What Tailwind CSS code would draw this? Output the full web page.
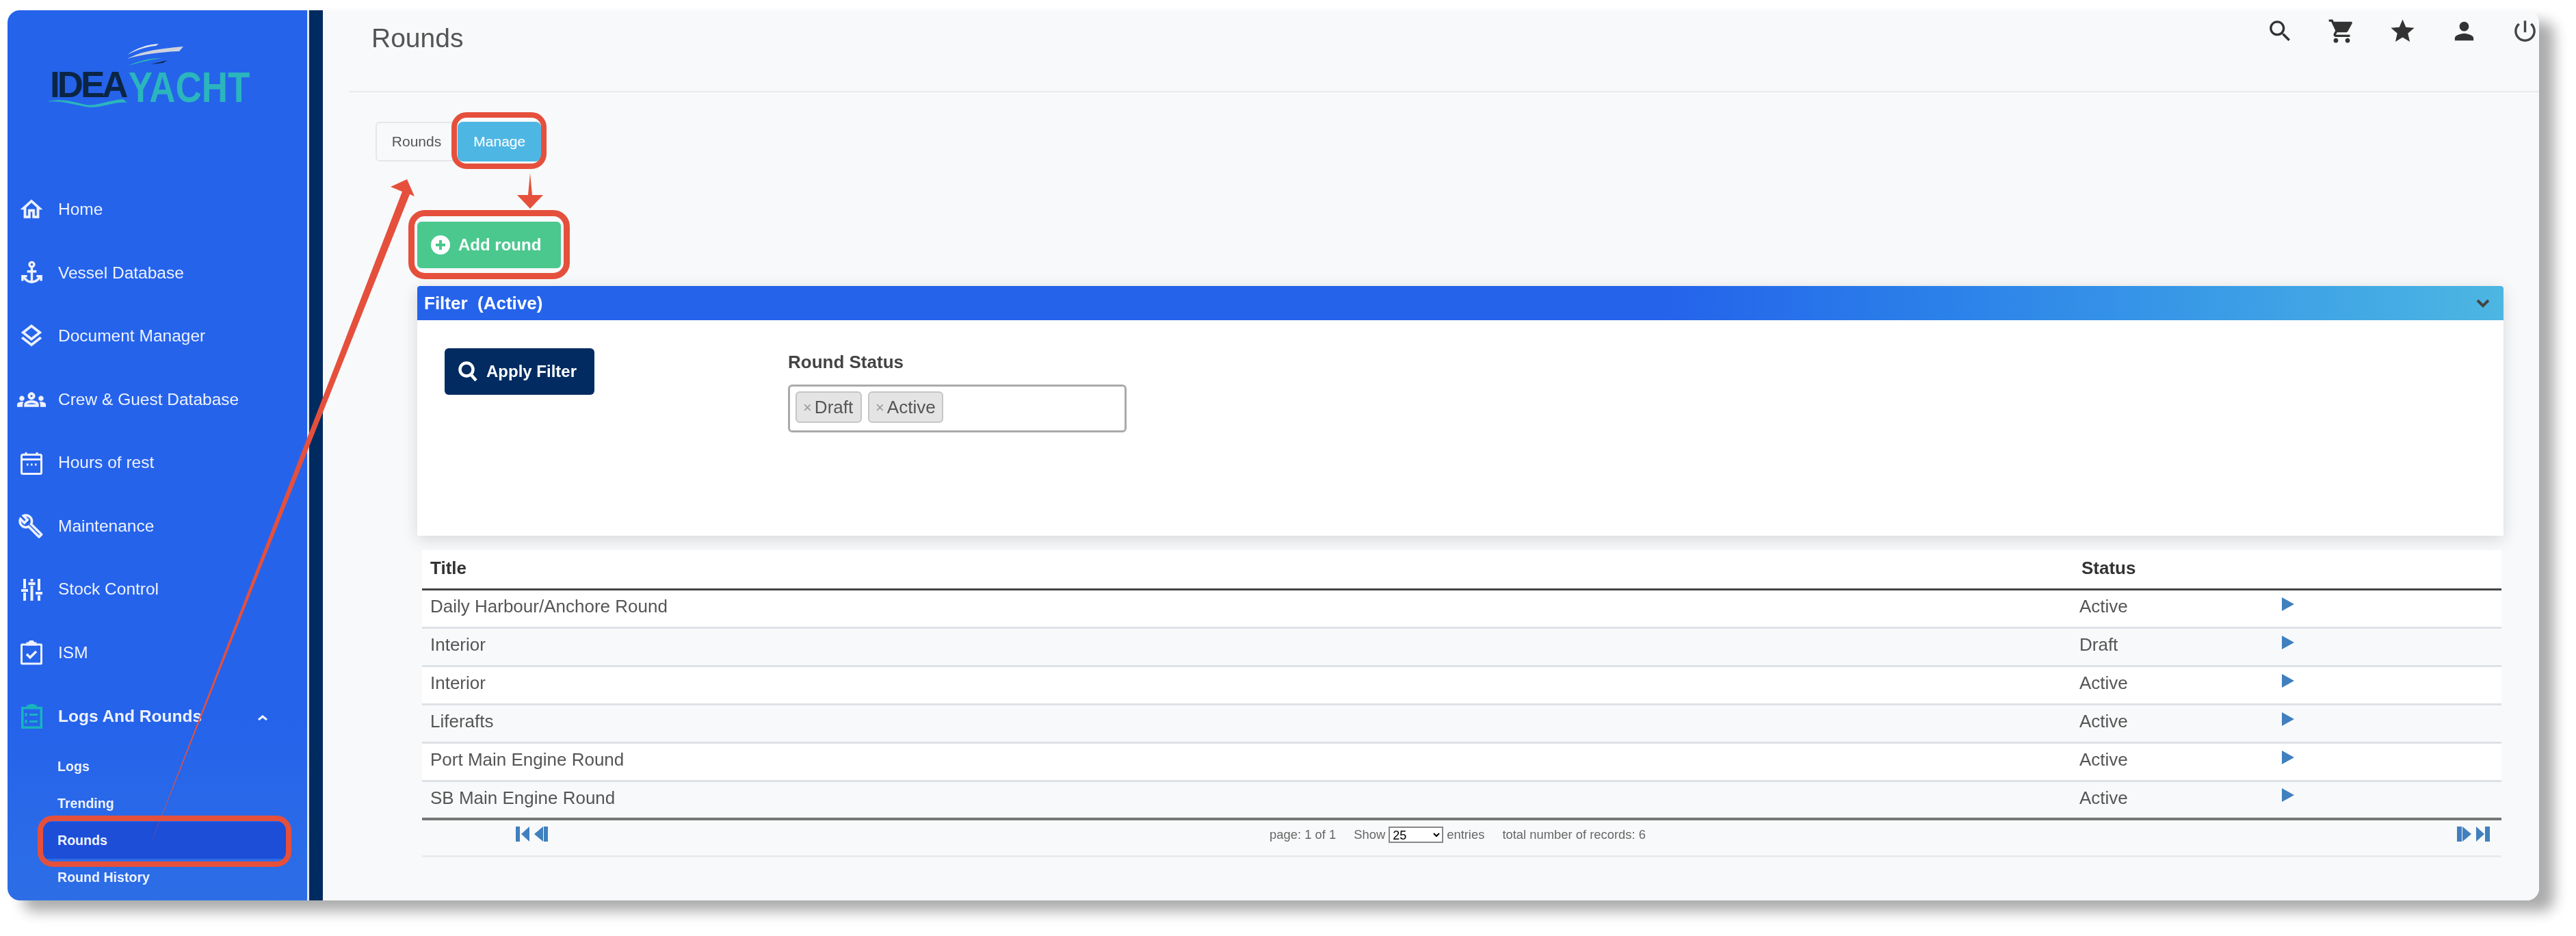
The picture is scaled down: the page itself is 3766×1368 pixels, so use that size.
<!DOCTYPE html>
<html lang="en">
<head>
    <meta charset="UTF-8">
    <title>Rounds</title>
    <script src="https://cdn.jsdelivr.net/npm/@tailwindcss/browser@4"></script>
</head>
<body class="bg-white font-['Liberation_Sans',sans-serif] overflow-hidden h-[1368px] relative">
<div class="flex ml-[11px] mt-[15px] w-[3701px] h-[1301px] rounded-[18px] overflow-hidden shadow-[22px_16px_20px_rgba(0,0,0,0.33)] absolute blur-[0.5px]">

    <!-- sidebar -->
    <aside class="w-[438px] shrink-0 bg-linear-to-b from-[#2563eb] from-80% to-[#2d6ee6] text-[#eef2ff]">
        <div class="h-[245px] pt-[90px] pl-[62px] relative">
            <svg class="absolute left-[57px] top-[47px]" width="300" height="100" viewBox="68 62 300 100">
                <path d="M186 86C205 76 225 72 268 68L262 75C235 76 205 80 186 86Z" fill="#cfd3dc"/>
                <path d="M186 80C200 70 215 65 232 64L228 67C214 68 200 73 186 80Z" fill="#e4e6ee"/>
                <path d="M187 96C200 90 220 84 237 85C222 87 205 91 187 96Z" fill="#2bb5bd"/>
                <path d="M220 94L245 88L238 92Z" fill="#0b2545"/>
                <path d="M68 149C85 143 105 148 125 153C140 156 160 146 180 145L186 150C165 148 145 160 125 156C105 152 85 146 68 149Z" fill="#2bb5bd"/>
            </svg>
            <div class="flex font-bold text-[53px] leading-[38px] h-[38px]">
                <span class="tracking-[-4px] text-[#0b2545]">IDEA</span>
                <span class="text-[#2bb5bd] origin-top scale-y-[1.18] ml-[4px]">YACHT</span>
            </div>
        </div>
        <nav class="text-[24.5px]">
            <a class="flex items-center h-[92.6px]">
                <span class="w-[70px] mr-[4px] flex justify-center"><svg width="38" height="38" viewBox="0 0 24 24" fill="currentColor" stroke="currentColor" stroke-width=".4"><path d="M12 5.69l5 4.5V18h-2v-6H9v6H7v-7.81l5-4.5M12 3L2 12h3v8h6v-6h2v6h6v-8h3L12 3z"/></svg></span>Home
            </a>
            <a class="flex items-center h-[92.6px]">
                <span class="w-[70px] mr-[4px] flex justify-center"><svg width="41" height="41" viewBox="0 0 24 24" fill="currentColor"><path d="M12,2A3,3 0 0,0 9,5C9,6.27 9.8,7.4 11,7.83V10H8V12H11V18.92C9.16,18.63 7.53,17.57 6.53,16H8V14H3V19H5V17.3C6.58,19.61 9.2,21 12,21C14.8,21 17.42,19.61 19,17.31V19H21V14H16V16H17.46C16.46,17.56 14.83,18.63 13,18.92V12H16V10H13V7.82C14.2,7.4 15,6.27 15,5A3,3 0 0,0 12,2M12,4A1,1 0 0,1 13,5A1,1 0 0,1 12,6A1,1 0 0,1 11,5A1,1 0 0,1 12,4Z"/></svg></span>Vessel Database
            </a>
            <a class="flex items-center h-[92.6px]">
                <span class="w-[70px] mr-[4px] flex justify-center"><svg width="40" height="40" viewBox="0 0 24 24" fill="currentColor" stroke="currentColor" stroke-width=".3"><path d="M11.99 18.54l-7.37-5.73L3 14.07l9 7 9-7-1.63-1.27zM12 16l7.36-5.73L21 9l-9-7-9 7 1.63 1.27L12 16zm0-11.47L17.74 9 12 13.47 6.26 9 12 4.53z"/></svg></span>Document Manager
            </a>
            <a class="flex items-center h-[92.6px]">
                <span class="w-[70px] mr-[4px] flex justify-center"><svg width="42" height="42" viewBox="0 0 24 24" fill="currentColor" stroke="currentColor" stroke-width=".3"><path d="M4 13c1.1 0 2-.9 2-2s-.9-2-2-2-2 .9-2 2 .9 2 2 2zm1.13 1.1C4.76 14.04 4.39 14 4 14c-.99 0-1.93.21-2.78.58C.48 14.9 0 15.62 0 16.43V18h4.5v-1.61c0-.83.23-1.61.63-2.29zM20 13c1.1 0 2-.9 2-2s-.9-2-2-2-2 .9-2 2 .9 2 2 2zm4 3.43c0-.81-.48-1.53-1.22-1.85C21.93 14.21 20.99 14 20 14c-.39 0-.76.04-1.13.1.4.68.63 1.46.63 2.29V18H24v-1.57zM16.24 13.65c-1.17-.52-2.61-.9-4.24-.9-1.63 0-3.07.39-4.24.9C6.68 14.13 6 15.21 6 16.39V18h12v-1.61c0-1.18-.68-2.26-1.76-2.74zM8.07 16c.09-.23.13-.39.91-.69.97-.38 1.99-.56 3.02-.56s2.05.18 3.02.56c.77.3.81.46.91.69H8.07zM12 8c.55 0 1 .45 1 1s-.45 1-1 1-1-.45-1-1 .45-1 1-1m0-2c-1.66 0-3 1.34-3 3s1.34 3 3 3 3-1.34 3-3-1.34-3-3-3z"/></svg></span>Crew &amp; Guest Database
            </a>
            <a class="flex items-center h-[92.6px]">
                <span class="w-[70px] mr-[4px] flex justify-center"><svg width="32" height="34" viewBox="0 0 32 34" fill="none" stroke="currentColor" stroke-width="3"><rect x="1.5" y="4.500" width="29" height="28" rx="2"/><path d="M1.5 11.500h29M8 1v5M24 1v5"/><path d="M9 19h2.500M15 19h2.500M21 19h2.500"/></svg></span>Hours of rest
            </a>
            <a class="flex items-center h-[92.6px]">
                <span class="w-[70px] mr-[4px] flex justify-center"><svg class="-ml-[3px]" width="38" height="38" viewBox="0 0 24 24" fill="currentColor" stroke="currentColor" stroke-width=".3"><path d="M22.61 18.99l-9.08-9.08c.93-2.34.45-5.1-1.44-7C9.79.61 6.21.4 3.66 2.25L7.5 6.1 6.08 7.51 2.25 3.69C.4 6.23.61 9.82 2.91 12.11c1.86 1.86 4.57 2.35 6.89 1.48l9.11 9.11c.39.39 1.02.39 1.41 0l2.3-2.3c.4-.38.4-1.01 0-1.41zm-3 1.6l-9.46-9.46c-.61.45-1.29.72-2 .82-1.36.2-2.79-.21-3.83-1.25C3.37 9.76 2.93 8.5 3 7.26l3.09 3.09 4.24-4.24-3.09-3.09c1.24-.07 2.49.37 3.44 1.31 1.08 1.08 1.49 2.57 1.24 3.96-.12.71-.42 1.37-.88 1.96l9.45 9.45-.88.88z"/></svg></span>Maintenance
            </a>
            <a class="flex items-center h-[92.6px]">
                <span class="w-[70px] mr-[4px] flex justify-center"><svg width="31" height="32" viewBox="0 0 31 32" fill="currentColor"><path d="M3 0h4v14H3zM3 20h4v12H3zM0 15h10v4H0zM13.500 0h4v4h-4zM13.500 10h4v22h-4zM10.500 5h10v4h-10zM24 0h4v17h-4zM24 24h4v8h-4zM21 19h10v4H21z"/></svg></span>Stock Control
            </a>
            <a class="flex items-center h-[92.6px]">
                <span class="w-[70px] mr-[4px] flex justify-center"><svg width="32" height="36" viewBox="0 0 32 36" fill="none" stroke="currentColor" stroke-width="3"><rect x="1.5" y="6" width="29" height="28" rx="1"/><path d="M10 6h12v-2h-3a3 3 0 0 0-6 0h-3z" fill="currentColor"/><path d="M9 20l5 5 9-9" stroke-width="3.500"/></svg></span>ISM
            </a>
            <a class="flex items-center h-[92.6px] font-bold">
                <span class="w-[70px] mr-[4px] flex justify-center text-[#17b5bd]"><svg width="31" height="36" viewBox="0 0 31 36" fill="none" stroke="currentColor" stroke-width="3.500"><rect x="1.750" y="5.750" width="27.500" height="28.500"/><path d="M10 5h11V3h-3a2.500 2.500 0 0 0-5 0h-3z" fill="currentColor"/><path d="M7 13v5M12 15.500h12M7 23v5M12 25.500h12" stroke-width="3"/></svg></span>Logs And Rounds
                <svg class="ml-[82px] mt-[4px]" width="14" height="8" viewBox="0 0 14 8" fill="none" stroke="currentColor" stroke-width="3"><path d="M1 7l6-5 6 5"/></svg>
            </a>
            <div class="text-[19.6px] font-bold">
                <a class="flex items-center h-[54px] ml-[52px] pl-[21px] w-[355px]">Logs</a>
                <a class="flex items-center h-[54px] ml-[52px] pl-[21px] w-[355px]">Trending</a>
                <a class="relative flex items-center h-[54px] ml-[52px] pl-[21px] w-[355px] bg-[#1d4ed8]">Rounds
                    <span class="absolute -left-[8px] -right-[8px] -top-[9px] -bottom-[12px] border-[8px] border-[#e5503c] rounded-[22px]"></span>
                </a>
                <a class="flex items-center h-[54px] ml-[52px] pl-[21px] w-[355px]">Round History</a>
            </div>
        </nav>
    </aside>
    <div class="w-[3px] shrink-0 bg-[#dfe7f6]"></div>
    <div class="w-[20px] shrink-0 bg-[#002b60]"></div>

    <!-- main -->
    <main class="flex-1 bg-[#f8f9fa] min-w-0">
        <header class="ml-[38px] h-[120px] border-b-2 border-[#e9ecef] flex justify-between pl-[33px]">
            <h1 class="text-[39px] leading-[46px] pt-[18px] text-[#555]">Rounds</h1>
            <div class="flex gap-[48.500px] pt-[10px] h-[51px] text-[#333]">
                <svg width="41" height="41" viewBox="0 0 24 24" fill="currentColor"><path d="M15.5 14h-.79l-.28-.27C15.41 12.59 16 11.11 16 9.5 16 5.91 13.09 3 9.5 3S3 5.91 3 9.5 5.910 16 9.5 16c1.61 0 3.09-.59 4.23-1.57l.27.28v.79l5 4.99L20.49 19l-4.99-5zm-6 0C7.01 14 5 11.99 5 9.5S7.010 5 9.5 5 14 7.01 14 9.5 11.99 14 9.5 14z"/></svg>
                <svg width="41" height="41" viewBox="0 0 24 24" fill="currentColor"><path d="M15.55 13c.75 0 1.41-.41 1.75-1.03l3.58-6.49c.37-.66-.11-1.48-.87-1.48H5.21l-.94-2H1v2h2l3.6 7.59-1.35 2.44C4.52 15.37 5.48 17 7 17h12v-2H7l1.1-2h7.45zM7 18c-1.1 0-1.99.9-1.99 2S5.9 22 7 22s2-.9 2-2-.9-2-2-2zm10 0c-1.1 0-1.99.9-1.99 2s.89 2 1.99 2 2-.9 2-2-.9-2-2-2z"/></svg>
                <svg width="41" height="41" viewBox="0 0 24 24" fill="currentColor"><path d="M12 17.27L18.18 21l-1.64-7.03L22 9.24l-7.19-.61L12 2 9.19 8.63 2 9.24l5.46 4.73L5.82 21z"/></svg>
                <svg width="41" height="41" viewBox="0 0 24 24" fill="currentColor"><path d="M12 12c2.21 0 4-1.79 4-4s-1.79-4-4-4-4 1.79-4 4 1.79 4 4 4zm0 2c-2.67 0-8 1.34-8 4v2h16v-2c0-2.66-5.33-4-8-4z"/></svg>
                <svg width="41" height="41" viewBox="0 0 24 24" fill="#444"><path d="M13 3h-2v10h2V3zm4.83 2.17l-1.42 1.42C17.99 7.86 19 9.81 19 12c0 3.87-3.13 7-7 7s-7-3.13-7-7c0-2.19 1.01-4.14 2.58-5.42L6.17 5.17C4.23 6.82 3 9.26 3 12c0 4.97 4.03 9 9 9s9-4.03 9-9c0-2.74-1.23-5.18-3.17-6.83z"/></svg>
            </div>
        </header>

        <div class="pt-[43px] pl-[77px]">
            <div class="flex h-[58px] text-[21px]">
                <button class="w-[120px] border-2 border-[#e5e7eb] rounded-l-[6px] text-[#555]">Rounds</button>
                <button class="relative w-[122px] bg-[#4db6e3] rounded-[8px] text-white">Manage
                    <span class="absolute -left-[9px] -right-[8px] -top-[14px] -bottom-[11px] border-[8px] border-[#e5503c] rounded-[22px]"></span>
                </button>
            </div>

            <div class="ml-[61px] mt-[88px] w-[3050px]">
                <button class="relative flex items-center w-[210px] h-[68px] pl-[20px] gap-[12px] bg-[#4ac88e] rounded-[6px] text-white font-bold text-[24px]">
                    <svg width="28" height="28" viewBox="0 0 28 28"><circle cx="14" cy="14" r="14" fill="#fff"/><path d="M14 7v14M7 14h14" stroke="#4ac88e" stroke-width="4"/></svg>
                    Add round
                    <span class="absolute -left-[13px] -right-[13px] -top-[17px] -bottom-[16px] border-[9px] border-[#e5503c] rounded-[24px]"></span>
                </button>

                <section class="mt-[26px] shadow-[0_5px_22px_rgba(0,0,0,0.14)] bg-white">
                    <div class="flex items-center justify-between h-[50px] pl-[10px] pr-[20px] rounded-t-[4px] bg-linear-to-r from-[#2563eb] from-60% to-[#4db6e2] text-white font-bold text-[26px] whitespace-pre">
                        <span>Filter  (Active)</span>
                        <svg width="20" height="14" viewBox="0 0 20 14" fill="none" stroke="#444" stroke-width="4"><path d="M2 3l8 8 8-8"/></svg>
                    </div>
                    <div class="h-[315px] flex pl-[40px] pt-[41px]">
                        <button class="flex items-center w-[219px] h-[68px] pl-[20px] gap-[13px] bg-[#012b61] rounded-[6px] text-white font-bold text-[24px]">
                            <svg width="28" height="30" viewBox="0 0 28 30" fill="none" stroke="#fff" stroke-width="4.500"><circle cx="12" cy="12" r="9.500"/><path d="M19 20l7 8"/></svg>
                            Apply Filter
                        </button>
                        <div class="ml-[283px]">
                            <label class="block text-[26px] leading-[30px] font-bold text-[#444] mt-[5px]">Round Status</label>
                            <div class="mt-[18px] w-[495px] h-[70px] border-[3px] border-[#aaa] rounded-[6px] bg-white flex gap-[9px] pl-[8px] pt-[7px] text-[26px] text-[#555]">
                                <span class="flex items-center gap-[4px] h-[46px] pl-[9px] w-[97px] bg-[#e4e4e4] border-2 border-[#c6c6c6] rounded-[6px]"><span class="text-[#999] text-[22px]">×</span>Draft</span>
                                <span class="flex items-center gap-[4px] h-[46px] pl-[9px] w-[110px] bg-[#e4e4e4] border-2 border-[#c6c6c6] rounded-[6px]"><span class="text-[#999] text-[22px]">×</span>Active</span>
                            </div>
                        </div>
                    </div>
                </section>

                <div class="ml-[7px] mt-[21px] w-[3040px]">
                    <table class="w-full table-fixed text-[26px] text-[#555]">
                        <thead class="bg-white text-[#333]">
                        <tr class="h-[57px] border-b-[3px] border-[#444]">
                            <th class="w-[2423px] pl-[12px] pb-[3px] text-left">Title</th>
                            <th class="w-[296px] pl-[3px] pb-[3px] text-left">Status</th>
                            <th></th>
                        </tr>
                        </thead>
                        <tbody>
                        <tr class="h-[56px] bg-white border-b-[3px] border-[#dee2e6]">
                            <td class="pl-[12px] pb-[5px]">Daily Harbour/Anchore Round</td>
                            <td class="pb-[5px]">Active</td>
                            <td class="pb-[13px]"><svg width="18" height="20" viewBox="0 0 18 20" fill="#4080bf"><path d="M0 0l18 10L0 20z"/></svg></td>
                        </tr>
                        <tr class="h-[56px] bg-[#f8f9fa] border-b-[3px] border-[#dee2e6]">
                            <td class="pl-[12px] pb-[5px]">Interior</td>
                            <td class="pb-[5px]">Draft</td>
                            <td class="pb-[13px]"><svg width="18" height="20" viewBox="0 0 18 20" fill="#4080bf"><path d="M0 0l18 10L0 20z"/></svg></td>
                        </tr>
                        <tr class="h-[56px] bg-white border-b-[3px] border-[#dee2e6]">
                            <td class="pl-[12px] pb-[5px]">Interior</td>
                            <td class="pb-[5px]">Active</td>
                            <td class="pb-[13px]"><svg width="18" height="20" viewBox="0 0 18 20" fill="#4080bf"><path d="M0 0l18 10L0 20z"/></svg></td>
                        </tr>
                        <tr class="h-[56px] bg-[#f8f9fa] border-b-[3px] border-[#dee2e6]">
                            <td class="pl-[12px] pb-[5px]">Liferafts</td>
                            <td class="pb-[5px]">Active</td>
                            <td class="pb-[13px]"><svg width="18" height="20" viewBox="0 0 18 20" fill="#4080bf"><path d="M0 0l18 10L0 20z"/></svg></td>
                        </tr>
                        <tr class="h-[56px] bg-white border-b-[3px] border-[#dee2e6]">
                            <td class="pl-[12px] pb-[5px]">Port Main Engine Round</td>
                            <td class="pb-[5px]">Active</td>
                            <td class="pb-[13px]"><svg width="18" height="20" viewBox="0 0 18 20" fill="#4080bf"><path d="M0 0l18 10L0 20z"/></svg></td>
                        </tr>
                        <tr class="h-[56px] bg-[#f8f9fa] border-b-[4px] border-[#777]">
                            <td class="pl-[12px] pb-[5px]">SB Main Engine Round</td>
                            <td class="pb-[5px]">Active</td>
                            <td class="pb-[13px]"><svg width="18" height="20" viewBox="0 0 18 20" fill="#4080bf"><path d="M0 0l18 10L0 20z"/></svg></td>
                        </tr>
                        </tbody>
                    </table>
                    <div class="flex items-start h-[54px] pt-[9px] pl-[137px] pr-[17px] border-b-[3px] border-[#e9ecef] text-[18.400px] text-[#666]">
                        <svg class="shrink-0" width="47" height="22" viewBox="0 0 47 22" fill="#4080bf"><path d="M0 0h6v22H0zM20 0L8 11l12 11zM40 0L27 11l13 11zM41 0h6v22h-6z"/></svg>
                        <div class="flex items-center h-[24px] ml-[1055px]">
                            <span>page: 1 of 1</span>
                            <span class="ml-[26px]">Show</span>
                            <select class="ml-[5px] w-[80px] h-[24px] border-2 border-[#888] bg-white text-[18px] text-black"><option>25</option></select>
                            <span class="ml-[5px]">entries</span>
                            <span class="ml-[26px]">total number of records: 6</span>
                        </div>
                        <svg class="ml-auto shrink-0" width="48" height="22" viewBox="0 0 48 22" fill="#4080bf"><path d="M0 0h7v22H0zM8 0l13 11L8 22zM28 0l12 11-12 11zM41 0h7v22h-7z"/></svg>
                    </div>
                </div>
            </div>
        </div>
    </main>
</div>

<!-- annotation arrows -->
<svg class="absolute left-0 top-0 pointer-events-none blur-[0.5px]" width="3766" height="1368" viewBox="0 0 3766 1368" fill="#e5503c">
    <path d="M595 262L606 287L599 284L219 1237L588 280L571 273Z"/>
    <path d="M775 253L778 285H794L775 305L756 285H772Z"/>
</svg>
</body>
</html>
